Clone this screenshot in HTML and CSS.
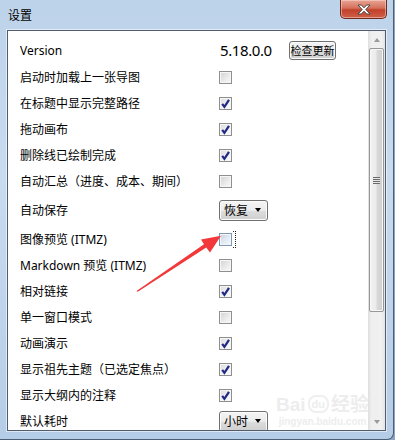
FILE: index.html
```html
<!DOCTYPE html>
<html lang="zh-CN">
<head>
	<meta charset="UTF-8">
	<title>设置</title>
	<link rel="stylesheet" href="styles.css">
</head>
<body>
	<div class="window">
		<div class="titlebar">
			<span class="title">设置</span>
			<span class="close">
				<svg width="14" height="11" viewBox="0 0 14 11">
					<path d="M1 1 L4.3 1 L7 3.8 L9.7 1 L13 1 L8.8 5.5 L13 10 L9.7 10 L7 7.2 L4.3 10 L1 10 L5.2 5.5 Z" fill="#fff" stroke="#4a4a4a" stroke-width="1" stroke-linejoin="round"/>
				</svg>
			</span>
		</div>
		<div class="client">
			<div class="list">
				<div class="row tall">
					<span class="label">Version</span>
					<span class="version">5.18.0.0</span>
					<span class="btn">检查更新</span>
				</div>
				<div class="row"><span class="label">启动时加载上一张导图</span><span class="check"></span></div>
				<div class="row"><span class="label">在标题中显示完整路径</span><span class="check on"><svg width="11" height="11" viewBox="0 0 11 11"><path d="M2.2 5.8 L4.4 8.8 L9 1.8" fill="none" stroke="#1f2a85" stroke-width="2.2"/></svg></span></div>
				<div class="row"><span class="label">拖动画布</span><span class="check on"><svg width="11" height="11" viewBox="0 0 11 11"><path d="M2.2 5.8 L4.4 8.8 L9 1.8" fill="none" stroke="#1f2a85" stroke-width="2.2"/></svg></span></div>
				<div class="row"><span class="label">删除线已绘制完成</span><span class="check on"><svg width="11" height="11" viewBox="0 0 11 11"><path d="M2.2 5.8 L4.4 8.8 L9 1.8" fill="none" stroke="#1f2a85" stroke-width="2.2"/></svg></span></div>
				<div class="row"><span class="label">自动汇总（进度、成本、期间）</span><span class="check"></span></div>
				<div class="row combo"><span class="label">自动保存</span><span class="select">恢复<i class="arrow"></i></span></div>
				<div class="row"><span class="label">图像预览 (ITMZ)</span><span class="check hover"></span><span class="focus"></span></div>
				<div class="row"><span class="label">Markdown 预览 (ITMZ)</span><span class="check"></span></div>
				<div class="row"><span class="label">相对链接</span><span class="check on"><svg width="11" height="11" viewBox="0 0 11 11"><path d="M2.2 5.8 L4.4 8.8 L9 1.8" fill="none" stroke="#1f2a85" stroke-width="2.2"/></svg></span></div>
				<div class="row"><span class="label">单一窗口模式</span><span class="check"></span></div>
				<div class="row"><span class="label">动画演示</span><span class="check on"><svg width="11" height="11" viewBox="0 0 11 11"><path d="M2.2 5.8 L4.4 8.8 L9 1.8" fill="none" stroke="#1f2a85" stroke-width="2.2"/></svg></span></div>
				<div class="row"><span class="label">显示祖先主题（已选定焦点）</span><span class="check on"><svg width="11" height="11" viewBox="0 0 11 11"><path d="M2.2 5.8 L4.4 8.8 L9 1.8" fill="none" stroke="#1f2a85" stroke-width="2.2"/></svg></span></div>
				<div class="row"><span class="label">显示大纲内的注释</span><span class="check on"><svg width="11" height="11" viewBox="0 0 11 11"><path d="M2.2 5.8 L4.4 8.8 L9 1.8" fill="none" stroke="#1f2a85" stroke-width="2.2"/></svg></span></div>
				<div class="row"><span class="label">默认耗时</span><span class="select">小时<i class="arrow"></i></span></div>
			</div>
			<div class="scrollbar">
				<span class="sb-btn"><i class="up"></i></span>
				<div class="track">
					<span class="thumb"><i class="grip"></i></span>
				</div>
				<span class="sb-btn"><i class="down"></i></span>
			</div>
		</div>

		<!-- watermark -->
		<div class="mark">
			<span class="mark-top">Bai<b>du</b>经验</span>
			<span class="mark-url">jingyan.baidu.com</span>
		</div>

		<!-- red annotation arrow -->
		<svg class="pointer" width="395" height="440" viewBox="0 0 395 440">
			<path d="M136.5 291 L204 244.3 L201 239.5 L221 235.8 L210 252.5 L206.2 247.4 L137.8 291.8 Z" fill="#f2383a"/>
		</svg>
	</div>
</body>
</html>
```

FILE: styles.css
```css
		* {
			box-sizing: border-box;
		}

		body {
			margin: 0;
			width: 395px;
			height: 440px;
			overflow: hidden;
			background: #8aa6c6;
			font-family: "Noto Sans", "Noto Sans CJK SC", sans-serif;
			font-size: 12px;
			color: #000;
		}

		.window {
			position: relative;
			width: 394px;
			height: 440px;
			display: flex;
			flex-direction: column;
			padding: 0 7px 8px 7px;
			background: linear-gradient(180deg, #bdd3ea 0%, #c8dbef 40%, #b6cde7 100%);
			border-right: 1px solid #4d5e74;
			border-bottom: 1px solid #4d5e74;
			border-bottom-right-radius: 7px;
		}

		.titlebar {
			height: 30px;
			display: flex;
			align-items: flex-start;
		}

		.title {
			margin-top: 6px;
			margin-left: 1px;
			font-size: 12px;
			color: #000;
		}

		.close {
			margin-left: auto;
			margin-right: -1px;
			width: 47px;
			height: 19px;
			display: flex;
			align-items: center;
			justify-content: center;
			border: 1px solid #6e2a20;
			border-top: 0;
			border-radius: 0 0 5px 5px;
			background: linear-gradient(180deg, #e8a595 0%, #d5705c 45%, #c2402a 55%, #cf6048 100%);
			box-shadow: inset 0 0 0 1px rgba(255, 220, 210, .5);
		}

		.client {
			flex: 1;
			display: flex;
			border: 1px solid #4f5d6e;
			background: #fff;
			overflow: hidden;
			box-shadow: 0 0 0 1px rgba(255, 255, 255, .55);
		}

		.list {
			flex: 1;
			padding: 5px 0 0 12px;
		}

		.row {
			height: 26px;
			display: flex;
			align-items: center;
		}

		.row.tall {
			height: 28px;
		}

		.row.combo {
			height: 32px;
		}

		.label {
			width: 199px;
			white-space: nowrap;
		}

		.version {
			width: 70px;
			padding-left: 1px;
			font-size: 15px;
			letter-spacing: -0.4px;
			color: #000;
		}

		.btn {
			width: 47px;
			height: 19px;
			display: flex;
			align-items: center;
			justify-content: center;
			font-size: 11px;
			border: 1px solid #707070;
			border-radius: 3px;
			background: linear-gradient(180deg, #f4f4f4 0%, #ebebeb 50%, #dcdcdc 51%, #d0d0d0 100%);
			box-shadow: inset 0 0 0 1px #fbfbfb;
		}

		.check {
			width: 13px;
			height: 13px;
			display: flex;
			align-items: center;
			justify-content: center;
			border: 1px solid #8f8f8f;
			background: linear-gradient(135deg, #d2d2d2 0%, #ececec 60%, #f8f8f8 100%);
			box-shadow: inset 0 0 0 1px #f6f6f6;
		}

		.check.on {
			background: linear-gradient(135deg, #dcdcdc 0%, #f2f2f2 60%, #fbfbfb 100%);
		}

		.check.hover {
			border-color: #7e99b8;
			background: linear-gradient(135deg, #c7d3e2 0%, #e6edf5 60%, #f6f9fc 100%);
		}

		.focus {
			width: 3px;
			height: 17px;
			margin-left: 1px;
			border: 1px dotted #222;
			border-left: 0;
		}

		.select {
			width: 49px;
			height: 21px;
			display: flex;
			align-items: center;
			padding-left: 4px;
			font-size: 12px;
			border: 1px solid #707070;
			border-radius: 3px;
			background: linear-gradient(180deg, #f4f4f4 0%, #ebebeb 50%, #dddddd 51%, #cfcfcf 100%);
			box-shadow: inset 0 0 0 1px #fbfbfb;
		}

		.select .arrow {
			margin-left: auto;
			margin-right: 6px;
			width: 0;
			height: 0;
			border-left: 3.5px solid transparent;
			border-right: 3.5px solid transparent;
			border-top: 4px solid #000;
		}

		.scrollbar {
			width: 17px;
			display: flex;
			flex-direction: column;
			background: linear-gradient(90deg, #dedede 0%, #efefef 20%, #f0f0f0 80%, #e4e4e4 100%);
		}

		.sb-btn {
			height: 17px;
			display: flex;
			align-items: center;
			justify-content: center;
		}

		.sb-btn .up,
		.sb-btn .down {
			width: 0;
			height: 0;
			border-left: 3.5px solid transparent;
			border-right: 3.5px solid transparent;
		}

		.sb-btn .up {
			border-bottom: 4px solid #9a9a9a;
		}

		.sb-btn .down {
			border-top: 4px solid #9a9a9a;
		}

		.track {
			flex: 1;
			padding: 0 1px;
		}

		.thumb {
			height: 264px;
			display: flex;
			align-items: center;
			justify-content: center;
			border: 1px solid #979797;
			border-radius: 2px;
			background: linear-gradient(90deg, #f2f2f2 0%, #ebebeb 45%, #d9d9d9 55%, #cfcfcf 100%);
			box-shadow: inset 0 0 0 1px #f7f7f7;
		}

		.grip {
			width: 7px;
			height: 7px;
			background: repeating-linear-gradient(180deg, #6a6a6a 0, #6a6a6a 1px, #e8e8e8 1px, #e8e8e8 2px);
		}

		.mark {
			position: absolute;
			left: 276px;
			top: 394px;
			display: flex;
			flex-direction: column;
			align-items: center;
			color: #ededed;
			font-family: "Liberation Sans", "Noto Sans CJK SC", sans-serif;
			pointer-events: none;
		}

		.mark-top {
			font-size: 19px;
			font-weight: bold;
			line-height: 22px;
		}

		.mark-top b {
			display: inline-block;
			margin: 0 2px;
			padding: 0 2px;
			font-size: 11px;
			line-height: 14px;
			border: 2px solid #efefef;
			border-radius: 8px;
			vertical-align: 3px;
		}

		.mark-url {
			font-size: 10px;
			font-weight: bold;
			line-height: 12px;
		}

		.pointer {
			position: absolute;
			left: 0;
			top: 0;
			pointer-events: none;
		}
```
